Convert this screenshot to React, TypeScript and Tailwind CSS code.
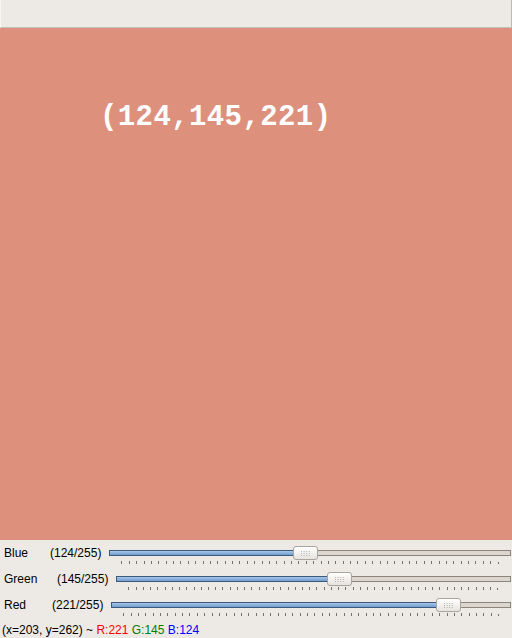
import React from "react";

const channels = [
  { name: "Blue", value: 124, labelW: "w-[46px]" },
  { name: "Green", value: 145, labelW: "w-[53px]" },
  { name: "Red", value: 221, labelW: "w-[48px]" },
];

const Grip = () => (
  <svg width="9" height="5" viewBox="0 0 9 5">
    {[0, 2, 4].map((y) =>
      [0, 2.6, 5.2, 7.8].map((x) => (
        <rect key={`${x}-${y}`} x={x} y={y} width="1" height="1" fill="#b4b0aa" />
      ))
    )}
  </svg>
);

const Slider = ({ value }: { value: number }) => {
  const left = `calc((100% - 25px) * ${value / 255})`;
  return (
    <div className="flex-1 flex flex-col">
      <div className="relative h-[14px]">
        <div className="absolute left-0 right-0 top-[4px] h-[6px] border border-[#8a857e] bg-[#dcd6ce]" />
        <div
          className="absolute left-0 top-[4px] h-[6px] border border-[#3b5a7c] bg-gradient-to-b from-[#a9c7e8] to-[#6f9ccd]"
          style={{ width: `calc(${left} + 4px)` }}
        />
        <div
          className="absolute top-0 h-[14px] w-[25px] rounded-[3px] border border-[#a9a49e] bg-gradient-to-b from-white to-[#e6e3df] flex items-center justify-center"
          style={{ left }}
        >
          <Grip />
        </div>
      </div>
      <div className="flex justify-between mx-[12px] mt-px">
        {Array.from({ length: 52 }).map((_, i) => (
          <div key={i} className={`w-px bg-[#74716c] ${i === 51 ? "h-[2px] mt-px" : "h-[3px]"}`} />
        ))}
      </div>
    </div>
  );
};

export default function App() {
  return (
    <div className="w-[512px] h-[638px] flex flex-col bg-[#edeae5] text-[12px] text-black font-['Liberation_Sans',sans-serif] overflow-hidden">
      <div className="h-[28px] border-b border-[#c4c0ba] border-r border-r-[#bdb9b3] border-l border-l-[#f7f6f4] bg-[#edeae5]" />
      <div className="h-[512px] bg-[#dd917c] pl-[100px] pt-[70px]">
        <div className="text-white font-['Liberation_Mono',monospace] font-bold text-[29px] leading-[40px] tracking-[0.4px]">
          (124,145,221)
        </div>
      </div>
      <div className="flex flex-col">
        {channels.map((c) => (
          <div key={c.name} className="flex h-[26px] pt-[6px] pr-px">
            <div className="flex h-[14px] items-center pl-[4px]">
              <span className={c.labelW}>{c.name}</span>
              <span>({c.value}/255)</span>
            </div>
            <div className="ml-[8px] flex-1 flex">
              <Slider value={c.value} />
            </div>
          </div>
        ))}
        <div className="h-[20px] flex items-center pl-[2px] pt-[4px] whitespace-pre">
          <span>(x=203, y=262) ~ </span>
          <span className="text-[#ff0000]">R:221</span>
          <span> </span>
          <span className="text-[#008000]">G:145</span>
          <span> </span>
          <span className="text-[#0000ff]">B:124</span>
        </div>
      </div>
    </div>
  );
}
